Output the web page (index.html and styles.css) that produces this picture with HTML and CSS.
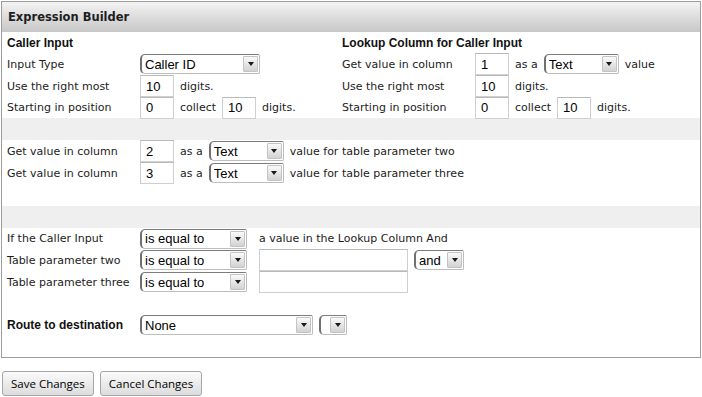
FILE: index.html
```html
<!DOCTYPE html>
<html>
<head>
<meta charset="utf-8">
<title>Expression Builder</title>
<link rel="stylesheet" href="styles.css">
</head>
<body>
<div class="panel">
  <div class="hd">Expression Builder</div>
  <div class="sec sec1">
    <div class="col col1">
      <div class="head">Caller Input</div>
      <div class="row"><span class="lbl">Input Type</span><div class="sel w120"><span class="sv">Caller ID</span><span class="arr"></span></div></div>
      <div class="row"><span class="lbl">Use the right most</span><input class="inp i34" value="10"><span>digits.</span></div>
      <div class="row"><span class="lbl">Starting in position</span><input class="inp i34" value="0"><span>collect</span><input class="inp i34" value="10"><span>digits.</span></div>
    </div>
    <div class="col col2">
      <div class="head">Lookup Column for Caller Input</div>
      <div class="row"><span class="lbl">Get value in column</span><input class="inp i34" value="1"><span>as a</span><div class="sel w75"><span class="sv">Text</span><span class="arr"></span></div><span>value</span></div>
      <div class="row"><span class="lbl">Use the right most</span><input class="inp i34" value="10"><span>digits.</span></div>
      <div class="row"><span class="lbl">Starting in position</span><input class="inp i34" value="0"><span>collect</span><input class="inp i34" value="10"><span>digits.</span></div>
    </div>
  </div>
  <div class="band"></div>
  <div class="sec sec2">
    <div class="row"><span class="lbl">Get value in column</span><input class="inp i34" value="2"><span>as a</span><div class="sel w75"><span class="sv">Text</span><span class="arr"></span></div><span>value for table parameter two</span></div>
    <div class="row"><span class="lbl">Get value in column</span><input class="inp i34" value="3"><span>as a</span><div class="sel w75"><span class="sv">Text</span><span class="arr"></span></div><span>value for table parameter three</span></div>
    <div class="row"></div>
  </div>
  <div class="band"></div>
  <div class="sec sec3">
    <div class="row r21"><span class="lbl">If the Caller Input</span><div class="sel w107"><span class="sv">is equal to</span><span class="arr"></span></div><span class="wide">a value in the Lookup Column And</span></div>
    <div class="row"><span class="lbl">Table parameter two</span><div class="sel w107"><span class="sv">is equal to</span><span class="arr"></span></div><input class="inp i149 wide" value=""><div class="sel w50"><span class="sv">and</span><span class="arr"></span></div></div>
    <div class="row"><span class="lbl">Table parameter three</span><div class="sel w107"><span class="sv">is equal to</span><span class="arr"></span></div><input class="inp i149 wide" value=""></div>
    <div class="row r21"></div>
    <div class="row"><span class="lbl bold">Route to destination</span><div class="sel w173"><span class="sv">None</span><span class="arr"></span></div><div class="sel w28"><span class="sv"></span><span class="arr"></span></div></div>
    <div class="row r21"></div>
  </div>
</div>
<div class="btns">
  <button class="btn">Save Changes</button>
  <button class="btn">Cancel Changes</button>
</div>
</body>
</html>
```

FILE: styles.css
```css
html, body {
  margin: 0;
  padding: 0;
  background: #fff;
}
body {
  font-family: "DejaVu Sans", Verdana, sans-serif;
  font-size: 11px;
  color: #1c1c1c;
}
.panel {
  margin: 1px 0 0 1px;
  width: 698px;
  border: 1px solid #9c9c9c;
}
.hd {
  height: 30px;
  display: flex;
  align-items: center;
  padding-left: 6px;
  font-family: "DejaVu Sans", Verdana, sans-serif;
  font-weight: bold;
  font-size: 11.5px;
  color: #1e1e1e;
  background: linear-gradient(#f3f3f3, #c7c7c7);
}
.sec {
  padding-left: 5px;
  background: #fff;
}
.sec1 {
  display: flex;
}
.col1 {
  width: 335px;
}
.col2 {
  flex: 1;
}
.head {
  height: 21px;
  padding-top: 1px;
  box-sizing: border-box;
  display: flex;
  align-items: center;
  font-family: "Liberation Sans", Arial, sans-serif;
  font-weight: bold;
  font-size: 12px;
  color: #111;
}
.row {
  height: 22px;
  display: flex;
  align-items: center;
  gap: 6px;
  white-space: nowrap;
}
.sec1 .row:last-child {
  height: 21px;
}
.r21 {
  height: 21px;
}
.lbl {
  width: 127px;
  flex: none;
  white-space: nowrap;
}
.bold {
  font-family: "Liberation Sans", Arial, sans-serif;
  font-weight: bold;
  font-size: 12px;
  color: #111;
}
.band {
  height: 22px;
  background: #efefef;
}
.inp {
  box-sizing: border-box;
  height: 22px;
  margin: 0;
  padding: 0 0 0 5px;
  border: 1px solid #cfcfcf;
  border-top-color: #b9b9b9;
  background: #fff;
  font-family: "Liberation Sans", Arial, sans-serif;
  font-size: 13px;
  color: #000;
  outline: none;
}
.row .wide {
  margin-left: 6px;
}
.i34 { width: 34px; }
.i149 { width: 149px; }
.sel {
  box-sizing: border-box;
  flex: none;
  height: 20px;
  display: flex;
  align-items: center;
  justify-content: space-between;
  padding: 0 1px 0 3px;
  border: 1px solid #bdbdbd;
  border-top-color: #7d7d7d;
  border-left: 2px solid #707070;
  border-radius: 5px 2px 2px 5px;
  background: #fff;
  font-family: "Liberation Sans", Arial, sans-serif;
  font-size: 13px;
  color: #000;
}
.sv {
  overflow: hidden;
}
.arr {
  box-sizing: border-box;
  width: 15px;
  height: 16px;
  flex: none;
  display: flex;
  align-items: center;
  justify-content: center;
  border: 1px solid #c4c4c4;
  border-radius: 1px;
  background: linear-gradient(#fafafa, #d2d2d2);
}
.arr::after {
  content: "";
  width: 0;
  height: 0;
  border-left: 3.5px solid transparent;
  border-right: 3.5px solid transparent;
  border-top: 4px solid #1a1a1a;
}
.w120 { width: 120px; }
.w75 { width: 75px; }
.w107 { width: 107px; }
.w50 { width: 50px; }
.w173 { width: 173px; }
.w28 { width: 28px; }
.btns {
  display: flex;
  gap: 6px;
  margin: 13px 0 0 2px;
}
.btn {
  height: 25px;
  margin: 0;
  padding: 0 8px;
  border: 1px solid #a6a6a6;
  border-radius: 3px;
  background: linear-gradient(#fbfbfb, #dcdcdc);
  font-family: "Open Sans", Tahoma, sans-serif;
  font-size: 11.5px;
  color: #000;
}
```
